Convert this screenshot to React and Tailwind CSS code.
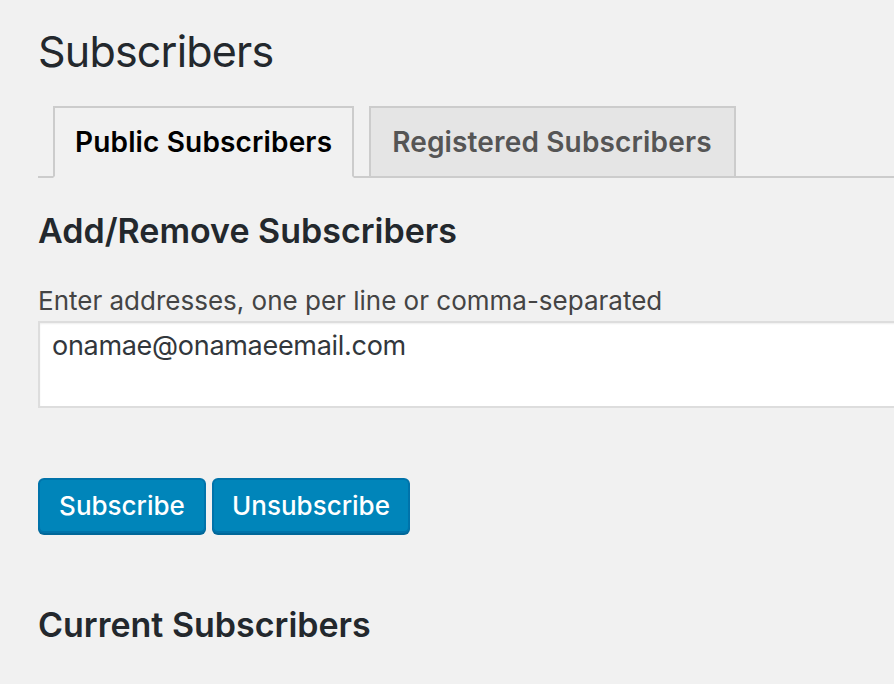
import React from 'react'

export default function App() {
    return (
        <div className="min-h-screen w-full overflow-hidden bg-[#f1f1f1] pl-[38px] text-[#23282d] font-['Inter',sans-serif]">
            {/* Page title */}
            <h1 className="pt-[23px] text-[43px] leading-[56px] tracking-[-0.8px] font-normal">Subscribers</h1>

            {/* Tabs */}
            <div className="mt-[27px] flex border-b-2 border-[#ccc] pl-[15px]">
                <div className="-mb-[2px] border-2 border-[#ccc] border-b-[#f1f1f1] bg-[#f1f1f1] px-[20px] py-[20px] text-[28px] leading-[28px] tracking-[0.15px] font-semibold text-black">
                    Public Subscribers
                </div>
                <div className="-mb-[2px] ml-[15px] border-2 border-[#ccc] bg-[#e5e5e5] pl-[21px] pr-[22px] py-[20px] text-[28px] leading-[28px] tracking-[0.15px] font-semibold text-[#555]">
                    Registered Subscribers
                </div>
            </div>

            {/* Add / remove */}
            <h2 className="mt-[36px] text-[34px] leading-[34px] font-semibold">Add/Remove Subscribers</h2>

            <label htmlFor="addresses" className="mt-[40px] block text-[26px] leading-[26px] text-[#444]">
                Enter addresses, one per line or comma-separated
            </label>
            <textarea
                id="addresses"
                readOnly
                defaultValue="onamae@onamaeemail.com"
                className="mt-[7px] block h-[87px] w-[880px] resize-none border-2 border-[#ddd] bg-white pl-[12px] pt-[9px] text-[27px] leading-[28px] tracking-[-0.3px] text-[#32373c] shadow-[inset_0_1px_2px_rgba(0,0,0,0.07)] outline-none"
            />

            <div className="mt-[70px] flex gap-[6px]">
                <button className="flex h-[55px] w-[168px] items-center justify-center rounded-[6px] border-2 border-[#0073aa] bg-[#0085ba] text-[26px] font-medium text-white shadow-[0_2px_0_#006799]">
                    Subscribe
                </button>
                <button className="flex h-[55px] w-[198px] items-center justify-center rounded-[6px] border-2 border-[#0073aa] bg-[#0085ba] text-[26px] font-medium text-white shadow-[0_2px_0_#006799]">
                    Unsubscribe
                </button>
            </div>

            {/* Current list */}
            <h2 className="mt-[75px] text-[34px] leading-[34px] font-semibold">Current Subscribers</h2>
        </div>
    )
}
